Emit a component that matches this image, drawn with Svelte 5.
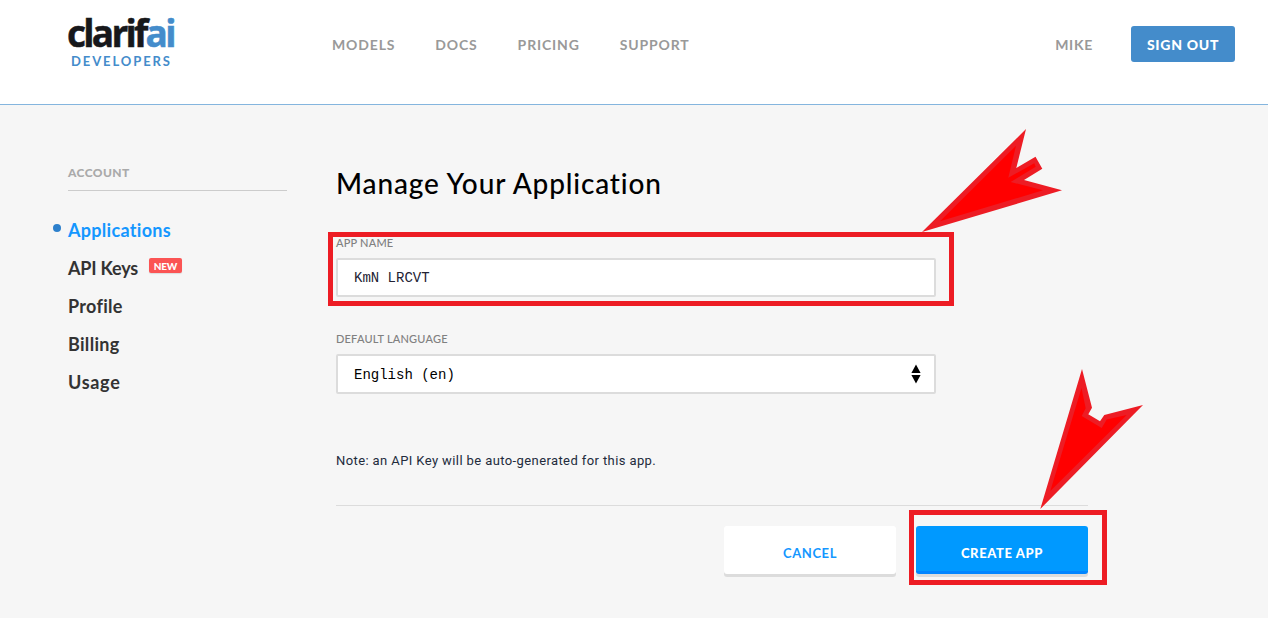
<script>
  const links = ['MODELS', 'DOCS', 'PRICING', 'SUPPORT'];
  const account = [
    { label: 'Applications', active: true },
    { label: 'API Keys', badge: 'NEW' },
    { label: 'Profile' },
    { label: 'Billing' },
    { label: 'Usage' }
  ];
  let appName = $state('KmN LRCVT');
</script>

<div class="page">
  <header>
    <div class="logo">
      <div class="word">clarif<span>ai</span></div>
      <div class="sub">DEVELOPERS</div>
    </div>
    <nav>
      {#each links as link}
        <span>{link}</span>
      {/each}
    </nav>
    <span class="user">MIKE</span>
    <button class="signout">SIGN OUT</button>
  </header>

  <main>
    <aside>
      <h2>ACCOUNT</h2>
      <ul>
        {#each account as item}
          <li class:active={item.active}>
            <span>{item.label}</span>
            {#if item.badge}<b>{item.badge}</b>{/if}
          </li>
        {/each}
      </ul>
    </aside>

    <section>
      <h1>Manage Your Application</h1>
      <label for="name">APP NAME</label>
      <input id="name" bind:value={appName} />
      <div class="label">DEFAULT LANGUAGE</div>
      <div class="select">
        <span>English (en)</span>
        <svg width="10" height="20" viewBox="0 0 10 20">
          <path d="M5 0.5L9.6 9H0.4zM5 19.5L9.6 11H0.4z" />
        </svg>
      </div>
      <p>Note: an API Key will be auto-generated for this app.</p>
      <div class="actions">
        <button class="cancel">CANCEL</button>
        <button class="create">CREATE APP</button>
      </div>
    </section>
  </main>

  <div class="mark name-mark"></div>
  <div class="mark create-mark"></div>
  <svg class="arrows" width="1268" height="618" viewBox="0 0 1268 618">
    <g fill="#ed1c24">
      <path d="M922 232L1026 129L1016.3 168L1035.5 156.7L1042.3 168.7L1024 180L1062 190.3z" />
      <path d="M1082 369L1092 407.7L1088.3 414.3L1100 421.3L1104.3 415L1143 405L1040.3 509z" />
    </g>
    <g fill="#f00">
      <path d="M940 221.3L1016 145.7L1008.3 177.7L1034.3 163.3L1035.7 166.7L1010.7 182L1043 190.3z" />
      <path d="M1081.5 388L1085.7 408.3L1081.7 416L1101.7 428L1106.7 419.6L1126.7 415L1050.3 491z" />
    </g>
  </svg>
</div>

<style>
  :global(body) { margin: 0; background: #f6f6f6; }
  .page {
    position: relative;
    width: 1268px;
    height: 618px;
    overflow: hidden;
    background: #f6f6f6;
    font-family: Lato, sans-serif;
    font-variant-ligatures: none;
  }
  * { box-sizing: border-box; }
  header {
    display: flex;
    align-items: flex-start;
    height: 105px;
    padding: 0 33px 0 67px;
    background: #fff;
    border-bottom: 1px solid #84b5de;
  }
  .logo { width: 265px; padding-top: 13px; color: #17181b; }
  .word {
    font: 700 37px/40px "Open Sans", sans-serif;
    letter-spacing: -2.75px;
    white-space: nowrap;
    -webkit-text-stroke: 0.5px currentColor;
  }
  .word span { color: #448ccb; }
  .sub {
    padding-left: 4px;
    color: #448ccb;
    font-weight: 700;
    font-size: 13px;
    line-height: 16px;
    letter-spacing: 1.9px;
  }
  nav { display: flex; flex: 1; gap: 40px; }
  nav span, .user {
    padding-top: 35px;
    font-weight: 700;
    font-size: 14px;
    line-height: 20px;
    letter-spacing: 0.85px;
    color: #999;
    white-space: nowrap;
  }
  .user { margin-right: 38px; letter-spacing: 0.7px; }
  button { border: 0; padding: 0; font-family: inherit; white-space: nowrap; }
  .signout {
    width: 104px;
    height: 36px;
    margin-top: 26px;
    padding-top: 1px;
    border-radius: 3px;
    background: #448ccb;
    color: #fff;
    font-weight: 900;
    font-size: 14px;
    letter-spacing: 0.7px;
  }
  main { display: flex; padding-left: 68px; }
  aside { width: 219px; margin-right: 49px; padding-top: 58px; }
  h2 {
    height: 28px;
    margin: 0 0 19px;
    border-bottom: 1px solid #ccc;
    color: #aaa;
    font-weight: 900;
    font-size: 12px;
    line-height: 20px;
    letter-spacing: 0.4px;
  }
  ul { margin: 0; padding: 0; list-style: none; }
  li {
    display: flex;
    align-items: center;
    height: 38px;
    color: #333;
    font-weight: 700;
    font-size: 18px;
    letter-spacing: 0.3px;
  }
  li span { padding-top: 1px; }
  li:nth-child(2) { letter-spacing: -0.2px; }
  li:last-child { letter-spacing: 0.7px; }
  li.active { color: #1497ff; letter-spacing: 0.3px; }
  li.active::before {
    content: '';
    width: 8px;
    height: 8px;
    margin: -2px 7px 0 -15px;
    border-radius: 50%;
    background: #2d80cc;
  }
  b {
    width: 33px;
    height: 15px;
    margin: -4px 0 0 11px;
    border-radius: 2px;
    background: #fb5454;
    box-shadow: 0 1px 1px #ddd;
    color: #fff;
    font-weight: 900;
    font-size: 10px;
    line-height: 17px;
    text-align: center;
  }
  section { width: 752px; padding-top: 57px; }
  h1 {
    margin: 0;
    color: #000;
    font-weight: 500;
    font-size: 28px;
    line-height: 42px;
    letter-spacing: 0.85px;
  }
  label, .label {
    display: block;
    color: #808080;
    font-weight: 500;
    font-size: 11px;
    line-height: 16px;
    letter-spacing: 0.2px;
  }
  label { margin: 31px 0 7px; }
  .label { margin: 34px 0 7px; }
  input, .select {
    width: 600px;
    height: 39px;
    padding: 0 16px;
    border: 2px solid #dcdcdc;
    border-radius: 2px;
    background: #fff;
    color: #223;
    font: 14px "Liberation Mono", monospace;
    display: flex;
    align-items: center;
    justify-content: space-between;
  }
  .select { height: 40px; padding-right: 13px; color: #000; }
  .select span { padding-top: 2px; }
  p {
    margin: 57px 0 0;
    height: 55px;
    border-bottom: 1px solid #dcdcdc;
    color: #222b3c;
    font: 13px/20px Roboto, sans-serif;
    letter-spacing: 0.4px;
  }
  .actions { display: flex; justify-content: flex-end; gap: 20px; padding-top: 20px; }
  .actions button {
    width: 172px;
    height: 48px;
    padding-top: 5px;
    border-radius: 3px;
    box-shadow: 0 3px 0 #dcdcdc;
    font-weight: 700;
    font-size: 13px;
    letter-spacing: 0.6px;
  }
  .cancel { background: #fff; color: #1497ff; }
  .actions .create {
    padding-top: 8px;
    background: #0099ff;
    border-bottom: 3px solid #0085ff;
    color: #fff;
    font-weight: 900;
  }
  .mark { position: absolute; border: 5px solid #ed1c24; }
  .name-mark { left: 328px; top: 232px; width: 626px; height: 74px; }
  .create-mark { left: 909px; top: 510px; width: 198px; height: 75px; }
  .arrows { position: absolute; left: 0; top: 0; pointer-events: none; }
</style>
